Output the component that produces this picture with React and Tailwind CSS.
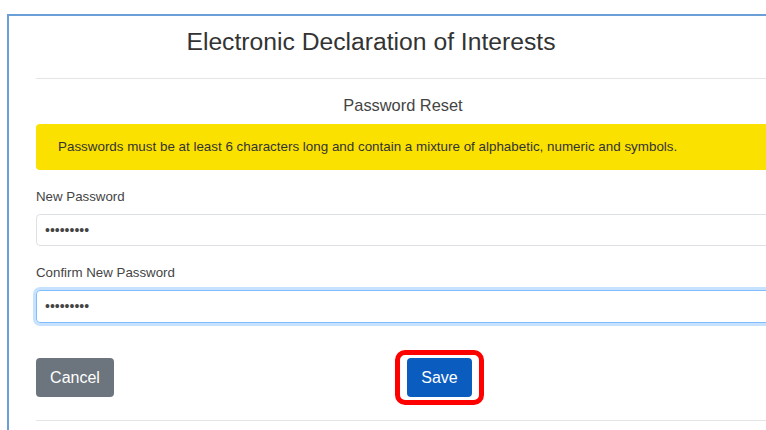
export default function App() {
  return (
    <div className="w-[766px] h-[430px] overflow-hidden bg-white font-['Liberation_Sans',Arial,sans-serif]">
      <div className="ml-[7px] mt-[14px] w-[900px] h-[440px] border-l-2 border-t-2 border-[#6a9fd8] pl-[27px]">
        <h1 className="w-[670px] pt-[12px] text-center text-[24.7px] leading-[28px] text-[#333]">
          Electronic Declaration of Interests
        </h1>
        <div className="mt-[22px] border-t border-[#e5e5e5]" />

        <p className="w-[734px] mt-[17px] text-center text-[16.4px] leading-[18px] text-[#444]">
          Password Reset
        </p>

        <div className="mt-[10px] h-[46px] flex items-center rounded-[4px] bg-[#fbe100] pl-[22px] text-[13.4px] text-[#333]">
          Passwords must be at least 6 characters long and contain a mixture of alphabetic, numeric and symbols.
        </div>

        <label className="block mt-[19px] text-[13.3px] leading-[16px] text-[#444]">New Password</label>
        <div className="mt-[9px] h-[32px] flex items-center rounded-[4px] border border-[#dde1e6] pl-[8px] text-[14px] text-[#444]">
          •••••••••
        </div>

        <label className="block mt-[19px] text-[13.3px] leading-[16px] text-[#444]">Confirm New Password</label>
        <div className="mt-[9px] h-[33px] flex items-center rounded-[4px] border border-[#80bdff] shadow-[0_0_0_3px_rgba(0,123,255,0.22)] pl-[8px] text-[14px] text-[#444]">
          •••••••••
        </div>

        <div className="mt-[27px] flex items-center">
          <button className="w-[78px] h-[39px] rounded-[4px] bg-[#6c757d] text-[16px] text-white">Cancel</button>
          <div className="ml-[281px] rounded-[10px] border-[5px] border-[#f00] px-[7px] py-[3px]">
            <button className="block w-[65px] h-[39px] rounded-[4px] bg-[#0b5cbf] text-[16px] text-white">Save</button>
          </div>
        </div>

        <div className="mt-[15px] border-t border-[#e5e5e5]" />
      </div>
    </div>
  )
}
